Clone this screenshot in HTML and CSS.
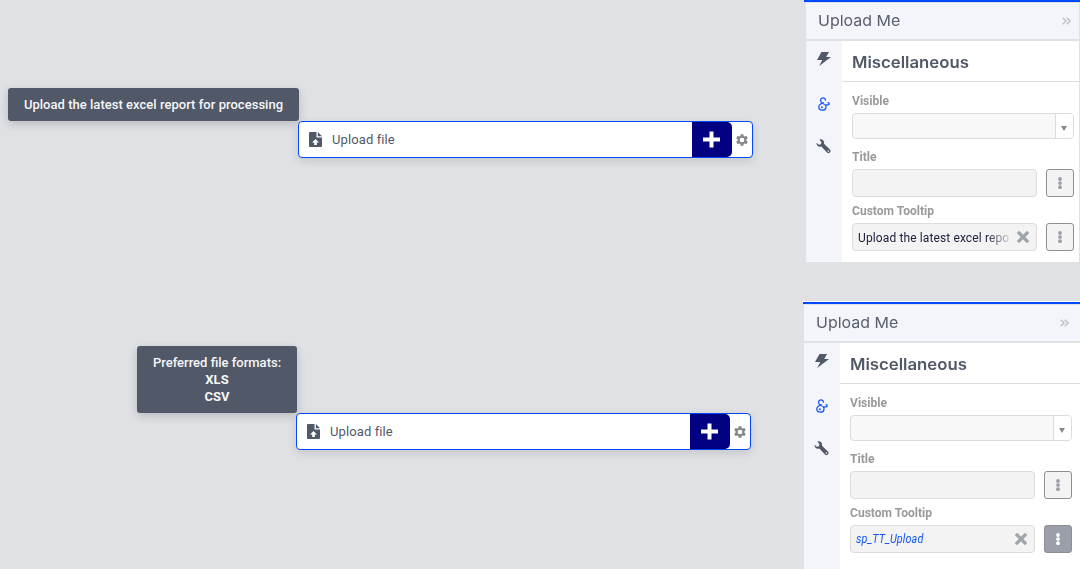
FILE: index.html
```html
<!DOCTYPE html>
<html lang="en">
<head>
<meta charset="utf-8">
<title>Upload Me</title>
<link rel="stylesheet" href="styles.css">
</head>
<body>
<svg class="defs" aria-hidden="true">
  <symbol id="file-up" viewBox="0 0 13 15"><path fill-rule="evenodd" d="M1 0h6.500v5.500H13V14a1 1 0 0 1-1 1H1a1 1 0 0 1-1-1V1a1 1 0 0 1 1-1zM6.500 7L3 10.500h2.200V13h2.600v-2.500H10z"/><path d="M8.800 0L13 4.300H8.800z"/></symbol>
  <symbol id="plus" viewBox="0 0 17 17"><path d="M6.500 0.500h4v6H17v4h-6.500v6h-4v-6H0v-4h6.500z"/></symbol>
  <symbol id="gear" viewBox="0 0 24 24"><path d="M19.430 12.980c.04-.32.07-.64.07-.98s-.03-.66-.07-.98l2.110-1.650a.5.5 0 0 0 .12-.64l-2-3.460a.5.5 0 0 0-.61-.22l-2.490 1a7.300 7.300 0 0 0-1.690-.98l-.38-2.650A.49.49 0 0 0 14 2h-4a.49.49 0 0 0-.49.42l-.38 2.650c-.61.25-1.170.59-1.690.98l-2.490-1a.49.49 0 0 0-.61.22l-2 3.460a.49.49 0 0 0 .12.64l2.110 1.650a7.900 7.900 0 0 0 0 1.960l-2.110 1.650a.5.5 0 0 0-.12.64l2 3.460c.12.22.39.3.61.22l2.490-1c.52.4 1.080.73 1.690.98l.38 2.650c.03.24.24.42.49.42h4c.25 0 .46-.18.49-.42l.38-2.650a7.300 7.300 0 0 0 1.690-.98l2.490 1c.23.09.49 0 .61-.22l2-3.460a.5.5 0 0 0-.12-.64zM12 16a4 4 0 1 1 0-8 4 4 0 0 1 0 8z" fill-rule="evenodd"/></symbol>
  <symbol id="chevrons" viewBox="0 0 9 8"><path d="M.7.7L4 4 .7 7.300M4.700.7L8 4 4.700 7.300" fill="none" stroke="currentColor" stroke-width="1.600"/></symbol>
  <symbol id="bolt" viewBox="0 0 14 14"><path d="M4.500 0H12L9.200 4.900H14L2.200 14 5.300 8H0z"/></symbol>
  <symbol id="amp" viewBox="0 0 12 14"><path d="M7.400 3.200C7.500.1 2.600 0 2.600 3.300c0 1.900 1.500 2.900 3.600 2.900C2.800 6.200.8 7.700.8 9.900c0 4 6.700 4.300 7.200.4.100-1.200-.3-2.100-1-2.500h3c1.600-.1 1.500-2.300.1-2.100" fill="none" stroke="currentColor" stroke-width="1.300" stroke-linecap="round"/><circle cx="3.900" cy="10.300" r="1"/></symbol>
  <symbol id="wrench" viewBox="0 0 15 15"><path fill-rule="evenodd" d="M3.500.4C6.300-.5 8.700 1.700 8 4.700l5.900 5.700c1.900 2-.8 5-2.900 3.200L5.300 7.500C2.700 8.300.3 6.500.5 3.700l2.300 2 2.100-.4.500-2zM12.300 11.300a.8.8 0 1 0 .01 1.600.8.8 0 0 0-.01-1.600z"/></symbol>
  <symbol id="dots" viewBox="0 0 4 12"><circle cx="2" cy="2" r="1.900"/><circle cx="2" cy="6.100" r="1.900"/><circle cx="2" cy="10.200" r="1.900"/></symbol>
  <symbol id="cross" viewBox="0 0 12 12"><path d="M2 2l8 8M10 2l-8 8" stroke="currentColor" stroke-width="3.200" stroke-linecap="square"/></symbol>
</svg>
<div class="app">
  <main class="canvas">
    <section class="scene scene-text">
      <div class="tooltip"><span class="tip-text">Upload the latest excel report for processing</span></div>
      <div class="upload">
        <svg class="file-icon"><use href="#file-up"/></svg>
        <span class="upload-label">Upload file</span>
        <button class="add"><svg><use href="#plus"/></svg></button>
        <span class="settings"><svg><use href="#gear"/></svg></span>
      </div>
    </section>
    <section class="scene scene-formats">
      <div class="tooltip"><span>Preferred file formats:</span><b>XLS</b><b>CSV</b></div>
      <div class="upload">
        <svg class="file-icon"><use href="#file-up"/></svg>
        <span class="upload-label">Upload file</span>
        <button class="add"><svg><use href="#plus"/></svg></button>
        <span class="settings"><svg><use href="#gear"/></svg></span>
      </div>
    </section>
  </main>
  <aside class="side">
    <section class="panel panel-first">
      <header class="panel-head"><span class="head-text">Upload Me</span><svg><use href="#chevrons"/></svg></header>
      <div class="panel-body">
        <nav class="rail"><svg class="bolt"><use href="#bolt"/></svg><svg class="amp"><use href="#amp"/></svg><svg class="wrench"><use href="#wrench"/></svg></nav>
        <div class="props">
          <h2><span class="title-text">Miscellaneous</span></h2>
          <div class="fields">
            <label class="label">Visible</label>
            <div class="combo"><span class="arrow"></span></div>
            <label class="label label-title">Title</label>
            <div class="row"><div class="input"></div><button class="more"><svg><use href="#dots"/></svg></button></div>
            <label class="label label-tip">Custom Tooltip</label>
            <div class="row"><div class="input"><span class="value fade">Upload the latest excel repo</span><svg class="cross"><use href="#cross"/></svg></div><button class="more"><svg><use href="#dots"/></svg></button></div>
          </div>
        </div>
      </div>
    </section>
    <section class="panel panel-second">
      <header class="panel-head"><span class="head-text">Upload Me</span><svg><use href="#chevrons"/></svg></header>
      <div class="panel-body">
        <nav class="rail"><svg class="bolt"><use href="#bolt"/></svg><svg class="amp"><use href="#amp"/></svg><svg class="wrench"><use href="#wrench"/></svg></nav>
        <div class="props">
          <h2><span class="title-text">Miscellaneous</span></h2>
          <div class="fields">
            <label class="label">Visible</label>
            <div class="combo"><span class="arrow"></span></div>
            <label class="label label-title">Title</label>
            <div class="row"><div class="input"></div><button class="more"><svg><use href="#dots"/></svg></button></div>
            <label class="label label-tip">Custom Tooltip</label>
            <div class="row"><div class="input"><span class="value bound">sp_TT_Upload</span><svg class="cross"><use href="#cross"/></svg></div><button class="more more-active"><svg><use href="#dots"/></svg></button></div>
          </div>
        </div>
      </div>
    </section>
  </aside>
</div>
</body>
</html>
```
FILE: styles.css
```css
* { box-sizing: border-box; }
body { margin: 0; background: #e0e1e5; font-family: Roboto, "Liberation Sans", sans-serif; overflow: hidden; }
svg { display: block; fill: currentColor; flex: none; }
.defs { display: none; }
button { padding: 0; border: 0; display: flex; align-items: center; justify-content: center; flex: none; }

.app { display: flex; width: 1080px; height: 569px; overflow: hidden; }
.canvas { width: 803px; flex: none; padding-top: 88px; }
.scene { display: flex; align-items: flex-start; }
.scene-text { height: 258px; padding-left: 8px; }
.scene-formats { padding-left: 137px; }

.tooltip { display: flex; flex-direction: column; align-items: center; justify-content: center; flex: none; margin-right: -1px; border-radius: 3px; background: #515867; color: #f5f6f8; font-size: 13px; line-height: 17px; font-weight: 500; box-shadow: 0 3px 10px rgba(0, 0, 0, .18); white-space: nowrap; }
.tip-text { letter-spacing: .03px; }
.scene-text .tooltip { width: 291px; height: 33px; }
.scene-formats .tooltip { width: 160px; height: 67px; }
.tooltip b { font-weight: 700; }

.upload { display: flex; align-items: center; width: 455px; height: 37px; flex: none; border: 1px solid #0048ff; border-radius: 4px; background: #fff; color: #515867; box-shadow: 0 3px 10px rgba(0, 0, 0, .12); overflow: hidden; }
.scene-text .upload { margin-top: 33px; }
.scene-formats .upload { margin-top: 67px; }
.file-icon { width: 13px; height: 15px; margin-left: 10px; }
.upload-label { flex: 1; margin-left: 10px; font-size: 13px; line-height: 17px; letter-spacing: .1px; }
.add { width: 40px; height: 35px; padding-right: 1px; border-radius: 0 5px 5px 0; background: #000080; color: #fff; }
.add svg { width: 17px; height: 17px; }
.settings { width: 21px; padding-right: 2px; color: #85878a; display: flex; justify-content: center; }
.settings { margin-right: -1px; }
.settings svg { width: 14px; height: 14px; }

.side { width: 277px; flex: none; }
.panel { border-top: 2px solid #0048ff; }
.panel-first { height: 262px; margin-left: 1px; padding: 1px 1px 0 2px; }
.panel-second { height: 268px; margin-top: 40px; padding: 1px 0 0 1px; box-shadow: 0 -1px #fff; }
.panel-head { display: flex; align-items: center; justify-content: space-between; height: 36px; padding: 0 8px 0 12px; background: #f4f5fa; color: #585e6c; font: 15px/20px Inter, sans-serif; }
.panel-second .panel-head { padding-right: 11px; }
.head-text, .title-text { display: inline-block; transform-origin: 0 50%; }
.head-text { transform: scaleX(1.065); }
.panel-head svg { width: 9px; height: 8px; color: #c3c5ca; }
.panel-body { display: flex; border-top: 2px solid #e0e1e5; height: 223px; background: #fff; }
.panel-second .panel-body { height: 230px; }
.rail { display: flex; flex-direction: column; align-items: center; width: 36px; flex: none; background: #f4f5fa; color: #515867; padding-top: 11px; }
.bolt { width: 14px; height: 14px; }
.amp { width: 12px; height: 14px; margin-top: 31px; color: #1557f5; }
.wrench { width: 15px; height: 15px; margin: 28px 1px 0 0; }
.props { flex: 1; }
h2 { display: flex; align-items: center; height: 41px; margin: 0; padding: 2px 0 0 10px; border-bottom: 1px solid #dcdde0; color: #515867; font: 600 16px/20px Inter, sans-serif; }
.title-text { transform: scaleX(1.047); }

.fields { width: 222px; margin-left: 10px; padding-top: 12px; }
.label { display: block; width: max-content; margin-bottom: 5px; color: #999; font-size: 12.5px; line-height: 14px; font-weight: 700; transform: scaleX(.965); transform-origin: 0 50%; }
.label-title { margin-top: 11px; }
.label-tip { margin-top: 7px; }
.combo { display: flex; justify-content: flex-end; height: 26px; border: 1px solid #dcdcdc; border-radius: 4px; background: #f8f8f8; overflow: hidden; }
.arrow { display: flex; align-items: center; justify-content: center; width: 18px; padding: 4px 1px 0 0; border-left: 1px solid #dcdcdc; background: #fff; }
.arrow::before { content: ""; border: 3px solid transparent; border-top: 5px solid #888; border-bottom: 0; }
.row { display: flex; justify-content: space-between; height: 28px; }
.input { display: flex; align-items: center; justify-content: space-between; width: 185px; padding: 0 7px 0 5px; border: 1px solid #dcdcdc; border-radius: 4px; background: #f3f3f3; }
.value { width: 151px; padding-top: 1px; white-space: nowrap; color: #20243c; font-size: 12px; line-height: 18px; letter-spacing: .12px; }
.fade { -webkit-mask-image: linear-gradient(90deg, #000 85%, transparent 103%); mask-image: linear-gradient(90deg, #000 85%, transparent 103%); }
.bound { width: max-content; padding-top: 0; color: #1557f5; font-style: italic; transform: scaleX(.9); transform-origin: 0 50%; }
.cross { width: 12px; height: 12px; color: #a0a4ac; }
.more { width: 28px; height: 28px; border: 1px solid #8f8f8f; border-radius: 3px; background: #f3f3f3; color: #9a9fa9; }
.more svg { width: 4px; height: 12px; }
.more-active { background: #9b9faa; color: #fff; }
```
